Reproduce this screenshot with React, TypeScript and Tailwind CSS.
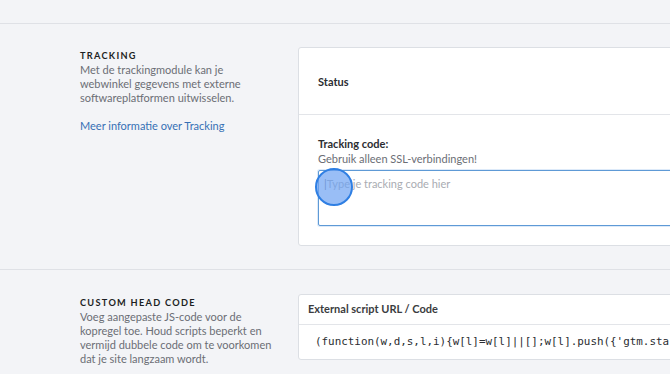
export default function App() {
  return (
    <div className="h-[374px] w-[670px] overflow-hidden bg-[#f3f4f7] font-['Lato','Noto_Sans',sans-serif]">
      {/* previous section tail */}
      <div className="h-[24px] border-b border-[#dfe1e6]" />

      {/* Tracking */}
      <section className="flex border-b border-[#dfe1e6] pt-[23px] pb-[23px] pl-[80px]">
        <div className="w-[218px] shrink-0 pr-[24px] pt-[2px]">
          <h2 className="text-[9.2px] font-bold uppercase leading-[14px] tracking-[0.14em] text-[#1d1f23]">
            Tracking
          </h2>
          <p className="text-[11px] leading-[14px] text-[#6b6e75]">
            Met de trackingmodule kan je webwinkel gegevens met externe softwareplatformen uitwisselen.
          </p>
          <a className="mt-[14px] block text-[11px] leading-[14px] text-[#3670b5]" href="#">
            Meer informatie over Tracking
          </a>
        </div>
        <div className="w-[420px] shrink-0 rounded-[3px] border border-[#dcdfe4] bg-white">
          <div className="flex h-[67px] items-center border-b border-[#e3e5e9] px-[19px] pt-[2px]">
            <span className="text-[11px] font-bold text-[#2b2d31]">Status</span>
          </div>
          <div className="px-[19px] pt-[21px] pb-[19px]">
            <div className="text-[11px] font-bold leading-[15px] text-[#2b2d31]">Tracking code:</div>
            <div className="text-[11px] leading-[15px] text-[#6b6e75]">Gebruik alleen SSL-verbindingen!</div>
            <div className="relative mt-[4px]">
              <div className="h-[56px] w-[420px] rounded-[2px] border border-[#5e9ad6] bg-white px-[5px] pt-[6px] text-[11px] leading-[14px] text-[#a9acb2] shadow-[0_0_0_1px_rgba(120,170,230,0.25)]">
                <span className="text-[#777]">|</span>Type je tracking code hier
              </div>
              <div className="absolute left-[-3px] top-[-2px] h-[38px] w-[38px] rounded-full border-2 border-[#2f7fe3] bg-[#6ea3f2]/70" />
            </div>
          </div>
        </div>
      </section>

      {/* Custom head code */}
      <section className="flex pt-[24px] pl-[80px]">
        <div className="w-[218px] shrink-0 pr-[24px] pt-[2px]">
          <h2 className="text-[9.2px] font-bold uppercase leading-[14px] tracking-[0.14em] text-[#1d1f23]">
            Custom head code
          </h2>
          <p className="text-[11px] leading-[14px] text-[#6b6e75]">
            Voeg aangepaste JS-code voor de kopregel toe. Houd scripts beperkt en vermijd dubbele code om te voorkomen dat je site langzaam wordt.
          </p>
          <button className="mt-[9px] h-[28px] w-[61px] rounded-[3px] bg-[#1f4f8f]" />
        </div>
        <div className="w-[420px] shrink-0 self-start rounded-[3px] border border-[#dcdfe4] bg-white">
          <div className="flex h-[30px] items-center border-b border-[#e3e5e9] px-[9px]">
            <span className="text-[11px] font-bold text-[#3a3c40]">External script URL / Code</span>
          </div>
          <div className="flex h-[34px] items-center whitespace-nowrap px-[16px] font-['DejaVu_Sans_Mono',monospace] text-[10.9px] text-[#2b2d31]">
            {"(function(w,d,s,l,i){w[l]=w[l]||[];w[l].push({'gtm.start':"}
          </div>
        </div>
      </section>
    </div>
  );
}
